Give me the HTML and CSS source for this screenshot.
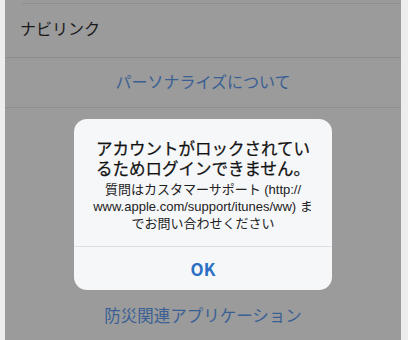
FILE: index.html
```html
<!DOCTYPE html>
<html lang="ja">
<head>
<meta charset="utf-8">
<link rel="stylesheet" href="styles.css">
</head>
<body>
<div class="frame">
  <div class="list">
    <div class="top-gap"></div>
    <div class="row row-left">ナビリンク</div>
    <div class="row row-link">パーソナライズについて</div>
    <div class="spacer"></div>
    <div class="row row-link row-last">防災関連アプリケーション</div>
  </div>
  <div class="alert">
    <div class="alert-body">
      <div class="alert-title">アカウントがロックされてい<br>るためログインできません。</div>
      <div class="alert-msg">質問はカスタマーサポート (http://<br>www.apple.com/support/itunes/ww) ま<br>でお問い合わせください</div>
    </div>
    <div class="alert-btn">OK</div>
  </div>
</div>
</body>
</html>
```

FILE: styles.css
```css
html, body {
  margin: 0;
  padding: 0;
}
body {
  width: 408px;
  height: 340px;
  overflow: hidden;
  background: #ededed;
  font-family: "Noto Sans CJK JP", "Noto Sans", sans-serif;
}
.frame {
  position: relative;
  width: 408px;
  height: 340px;
  padding: 0 7px 0 5px;
  box-sizing: border-box;
}
.list {
  background: #9b9b9b;
  height: 340px;
  display: flex;
  flex-direction: column;
}
.top-gap {
  height: 3px;
  flex: none;
  margin-left: 17px;
  border-bottom: 1px solid #8e8e8e;
}
.row {
  flex: none;
  display: flex;
  align-items: center;
  font-size: 16px;
  box-sizing: border-box;
  border-bottom: 1px solid #8e8e8e;
}
.row-left {
  height: 54px;
  padding: 0 0 5px 15px;
  color: #1a1a1a;
}
.row-link {
  height: 50px;
  justify-content: center;
  color: #3a5f94;
  padding-bottom: 3px;
}
.row-last {
  border-bottom: none;
  font-size: 16.5px;
  height: 48px;
}
.spacer {
  flex: none;
  height: 184px;
}
.alert {
  position: absolute;
  left: 74px;
  top: 119px;
  width: 258px;
  height: 171px;
  background: #f6f7f9;
  border-radius: 13px;
  display: flex;
  flex-direction: column;
  overflow: hidden;
}
.alert-body {
  padding: 20px 6px 0;
  height: 128px;
  box-sizing: border-box;
  text-align: center;
  white-space: nowrap;
  border-bottom: 1px solid #dfe0e3;
}
.alert-title {
  font-family: "Liberation Sans", "Noto Sans CJK JP", sans-serif;
  font-size: 16.5px;
  line-height: 20px;
  font-weight: 400;
  -webkit-text-stroke: 0.25px #111;
  color: #111;
}
.alert-msg {
  margin-top: 2px;
  font-family: "Liberation Sans", "Noto Sans CJK JP", sans-serif;
  font-size: 13px;
  line-height: 17px;
  color: #222;
}
.alert-btn {
  flex: 1;
  display: flex;
  align-items: center;
  justify-content: center;
  font-size: 17px;
  font-weight: 700;
  color: #2a6fc3;
  padding-bottom: 1px;
}
```
